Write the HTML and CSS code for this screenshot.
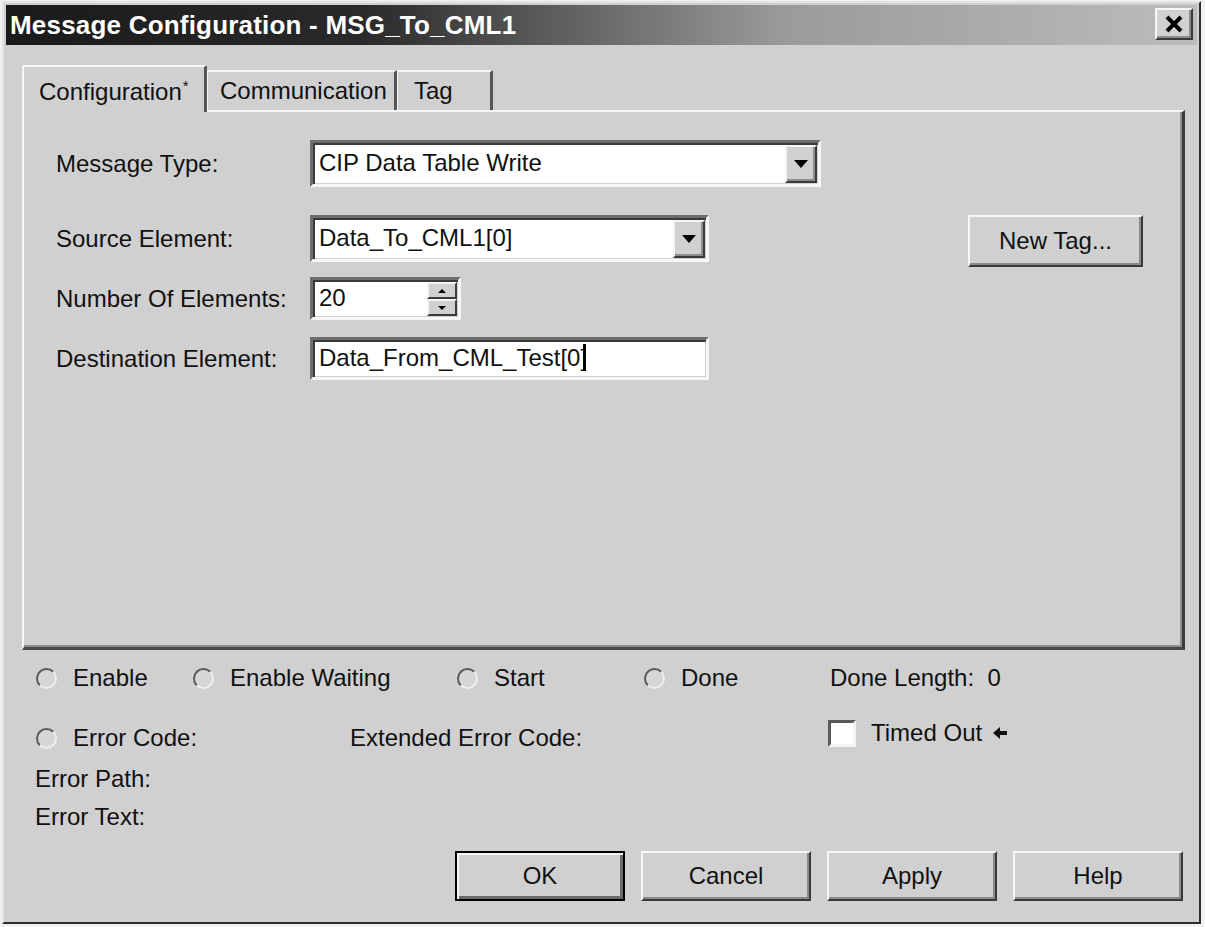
FILE: index.html
```html
<!DOCTYPE html>
<html lang="en">
<head>
  <meta charset="UTF-8" />
  <meta name="viewport" content="width=device-width, initial-scale=1.0" />
  <title>Message Configuration - MSG_To_CML1</title>
  <link rel="stylesheet" href="styles.css">
</head>
<body>

  <div class="window">

    <!-- Title bar -->
    <div class="titlebar">
      <span class="title">Message Configuration - MSG_To_CML1</span>
      <span class="close-btn">
        <svg width="20" height="18" viewBox="0 0 20 18">
          <path d="M3 2 L17 16 M17 2 L3 16" stroke="#000" stroke-width="4" fill="none" />
        </svg>
      </span>
    </div>

    <div class="dialog-body">

      <!-- Tabs -->
      <div class="tabs">
        <div class="tab tab-active">Configuration<span class="star">*</span></div>
        <div class="tab tab-comm">Communication</div>
        <div class="tab tab-tag">Tag</div>
      </div>

      <!-- Configuration page -->
      <div class="panel">
        <div class="form-row row-type">
          <span class="field-label">Message Type:</span>
          <div class="field combo combo-type">
            <span class="value">CIP Data Table Write</span>
            <span class="drop-btn"><span class="arrow-down"></span></span>
          </div>
        </div>

        <div class="form-row row-source">
          <span class="field-label">Source Element:</span>
          <div class="field combo combo-source">
            <span class="value">Data_To_CML1[0]</span>
            <span class="drop-btn"><span class="arrow-down"></span></span>
          </div>
          <span class="btn btn-newtag">New Tag...</span>
        </div>

        <div class="form-row row-count">
          <span class="field-label">Number Of Elements:</span>
          <div class="field spinner">
            <span class="value">20</span>
            <span class="spin-btns">
              <span class="spin-btn"><span class="arrow-up-small"></span></span>
              <span class="spin-btn"><span class="arrow-down-small"></span></span>
            </span>
          </div>
        </div>

        <div class="form-row row-dest">
          <span class="field-label">Destination Element:</span>
          <div class="field text-field">
            <span class="value">Data_From_CML_Test[0]<span class="caret"></span></span>
          </div>
        </div>
      </div>

      <!-- Status bits -->
      <div class="status">
        <div class="status-row status-bits">
          <span class="bit"><span class="radio"></span>Enable</span>
          <span class="bit"><span class="radio"></span>Enable Waiting</span>
          <span class="bit"><span class="radio"></span>Start</span>
          <span class="bit"><span class="radio"></span>Done</span>
          <span class="bit">Done Length:&nbsp; 0</span>
        </div>
        <div class="status-row status-errors">
          <span class="bit"><span class="radio"></span>Error Code:</span>
          <span class="bit">Extended Error Code:</span>
          <span class="bit bit-timeout"><span class="checkbox"></span>Timed Out
            <svg class="timeout-arrow" width="16" height="14" viewBox="0 0 16 14">
              <path d="M1 7 L8 1 L8 5 L15 5 L15 9 L8 9 L8 13 Z" fill="#111" />
            </svg>
          </span>
        </div>
        <div class="error-line error-path">Error Path:</div>
        <div class="error-line">Error Text:</div>
      </div>

      <!-- Dialog buttons -->
      <div class="actions">
        <span class="btn btn-action btn-default">OK</span>
        <span class="btn btn-action">Cancel</span>
        <span class="btn btn-action">Apply</span>
        <span class="btn btn-action">Help</span>
      </div>

    </div>
  </div>

</body>
</html>
```

FILE: styles.css
```css
* {
  margin: 0;
  padding: 0;
  box-sizing: border-box;
}

body {
  background: #f2f2f2;
  font-family: "Liberation Sans", Arial, sans-serif;
  font-size: 24px;
  color: #111;
}

.window {
  width: 1199px;
  height: 923px;
  margin: 1px 0 0 2px;
  padding: 2px;
  background: #d0d0d0;
  border: 2px solid;
  border-color: #e4e4e4 #2e2e2e #2e2e2e #e4e4e4;
  display: flex;
  flex-direction: column;
}

/* Title bar */
.titlebar {
  height: 40px;
  display: flex;
  align-items: flex-start;
  justify-content: space-between;
  background: linear-gradient(to right, #1a1a1a 0%, #2a2a2a 30%, #9a9a9a 65%, #bcbcbc 100%);
}

.title {
  color: #fff;
  font-weight: bold;
  font-size: 26px;
  line-height: 40px;
  padding-left: 4px;
  letter-spacing: 0.2px;
}

.close-btn {
  width: 38px;
  height: 32px;
  margin: 3px 4px 0 0;
  background: #d2d2d2;
  border: 2px solid;
  border-color: #f6f6f6 #3a3a3a #3a3a3a #f6f6f6;
  box-shadow: inset -2px -2px 0 #8c8c8c;
  display: flex;
  align-items: center;
  justify-content: center;
}

.dialog-body {
  flex: 1;
  display: flex;
  flex-direction: column;
  padding: 20px 12px 0 16px;
}

/* Tabs */
.tabs {
  height: 45px;
  display: flex;
  align-items: flex-end;
  position: relative;
  z-index: 1;
}

.tab {
  height: 40px;
  line-height: 38px;
  background: #d0d0d0;
  border-top: 2px solid #f6f6f6;
  border-right: 3px solid #555;
  white-space: nowrap;
}

.tab-active {
  width: 185px;
  height: 47px;
  margin-bottom: -2px;
  line-height: 38px;
  padding-left: 15px;
  border-left: 2px solid #f6f6f6;
  border-radius: 2px 2px 0 0;
}

.star {
  font-size: 15px;
  vertical-align: 9px;
  margin-left: 1px;
}

.tab-comm {
  width: 190px;
  padding-left: 12px;
  border-left: 1px solid #f6f6f6;
}

.tab-tag {
  width: 96px;
  padding-left: 16px;
  border-left: 1px solid #f6f6f6;
}

/* Page panel */
.panel {
  height: 540px;
  padding: 28px 39px 0 32px;
  border: 2px solid;
  border-color: #f6f6f6 #3c3c3c #4a4a4a #f6f6f6;
  border-right-width: 3px;
  border-bottom-width: 3px;
  box-shadow: inset -2px -2px 0 #8e8e8e;
}

.form-row {
  display: flex;
  align-items: flex-start;
}

.row-source {
  margin-top: 28px;
}

.row-count {
  margin-top: 10px;
}

.row-dest {
  margin-top: 17px;
}

.field-label {
  width: 254px;
  flex-shrink: 0;
  line-height: 47px;
  white-space: nowrap;
}

.row-count .field-label,
.row-dest .field-label {
  line-height: 43px;
}

.field {
  height: 47px;
  display: flex;
  align-items: stretch;
  background: #fff;
  border: 3px solid;
  border-color: #6e6e6e #f6f6f6 #f6f6f6 #6e6e6e;
  box-shadow: inset 2px 2px 0 #3a3a3a, inset -1px -1px 0 #d2d2d2;
}

.value {
  flex: 1;
  line-height: 39px;
  padding-left: 6px;
  white-space: nowrap;
}

.combo-type {
  width: 511px;
}

.combo-source {
  width: 399px;
}

.drop-btn {
  width: 32px;
  margin: 2px 1px 1px 0;
  background: #d0d0d0;
  border: 2px solid;
  border-color: #f4f4f4 #3a3a3a #3a3a3a #f4f4f4;
  box-shadow: inset -2px -2px 0 #8c8c8c;
  display: flex;
  align-items: center;
  justify-content: center;
}

.arrow-down {
  width: 0;
  height: 0;
  border-left: 7px solid transparent;
  border-right: 7px solid transparent;
  border-top: 8px solid #000;
}

.spinner {
  width: 151px;
  height: 43px;
}

.spinner .value {
  line-height: 35px;
}

.spin-btns {
  width: 30px;
  margin: 2px 1px 1px 0;
  display: flex;
  flex-direction: column;
}

.spin-btn {
  flex: 1;
  background: #d0d0d0;
  border: 2px solid;
  border-color: #f4f4f4 #3a3a3a #3a3a3a #f4f4f4;
  display: flex;
  align-items: center;
  justify-content: center;
}

.arrow-up-small {
  border-left: 4px solid transparent;
  border-right: 4px solid transparent;
  border-bottom: 4px solid #000;
}

.arrow-down-small {
  border-left: 4px solid transparent;
  border-right: 4px solid transparent;
  border-top: 4px solid #000;
}

.text-field {
  width: 399px;
  height: 43px;
}

.text-field .value {
  line-height: 35px;
}

.caret {
  display: inline-block;
  width: 3px;
  height: 27px;
  margin-left: -4px;
  background: #000;
  vertical-align: -5px;
}

/* Buttons */
.btn {
  display: flex;
  align-items: center;
  justify-content: center;
  background: #d0d0d0;
  border: 2px solid;
  border-color: #f6f6f6 #3a3a3a #3a3a3a #f6f6f6;
  box-shadow: inset -2px -2px 0 #8a8a8a;
  white-space: nowrap;
}

.btn-newtag {
  width: 175px;
  height: 52px;
  margin-left: auto;
}

/* Status bits */
.status {
  padding: 10px 0 0 14px;
}

.status-row {
  display: grid;
  align-items: center;
  height: 36px;
}

.status-bits {
  grid-template-columns: 157px 264px 187px 186px auto;
}

.status-errors {
  margin-top: 24px;
  grid-template-columns: 314px 478px auto;
}

.bit {
  display: flex;
  align-items: center;
  white-space: nowrap;
}

.bit-timeout {
  align-self: start;
  margin-top: -1px;
}

.radio {
  width: 21px;
  height: 21px;
  margin-right: 16px;
  border-radius: 50%;
  background: #d6d6d6;
  border: 2px solid;
  border-color: #5a5a5a #eeeeee #eeeeee #5a5a5a;
}

.checkbox {
  width: 28px;
  height: 27px;
  margin-right: 15px;
  background: #fff;
  border: 3px solid;
  border-color: #5a5a5a #f4f4f4 #f4f4f4 #5a5a5a;
}

.timeout-arrow {
  margin-left: 10px;
}

.error-line {
  line-height: 38px;
  margin-left: -1px;
}

.error-path {
  margin-top: 4px;
}

/* Dialog buttons */
.actions {
  display: flex;
  justify-content: flex-end;
  gap: 16px;
  margin: 15px 2px 0 0;
}

.btn-action {
  width: 170px;
  height: 50px;
}

.btn-default {
  border-color: #000;
  box-shadow: inset 2px 2px 0 #f6f6f6, inset -3px -3px 0 #6a6a6a;
}
```
